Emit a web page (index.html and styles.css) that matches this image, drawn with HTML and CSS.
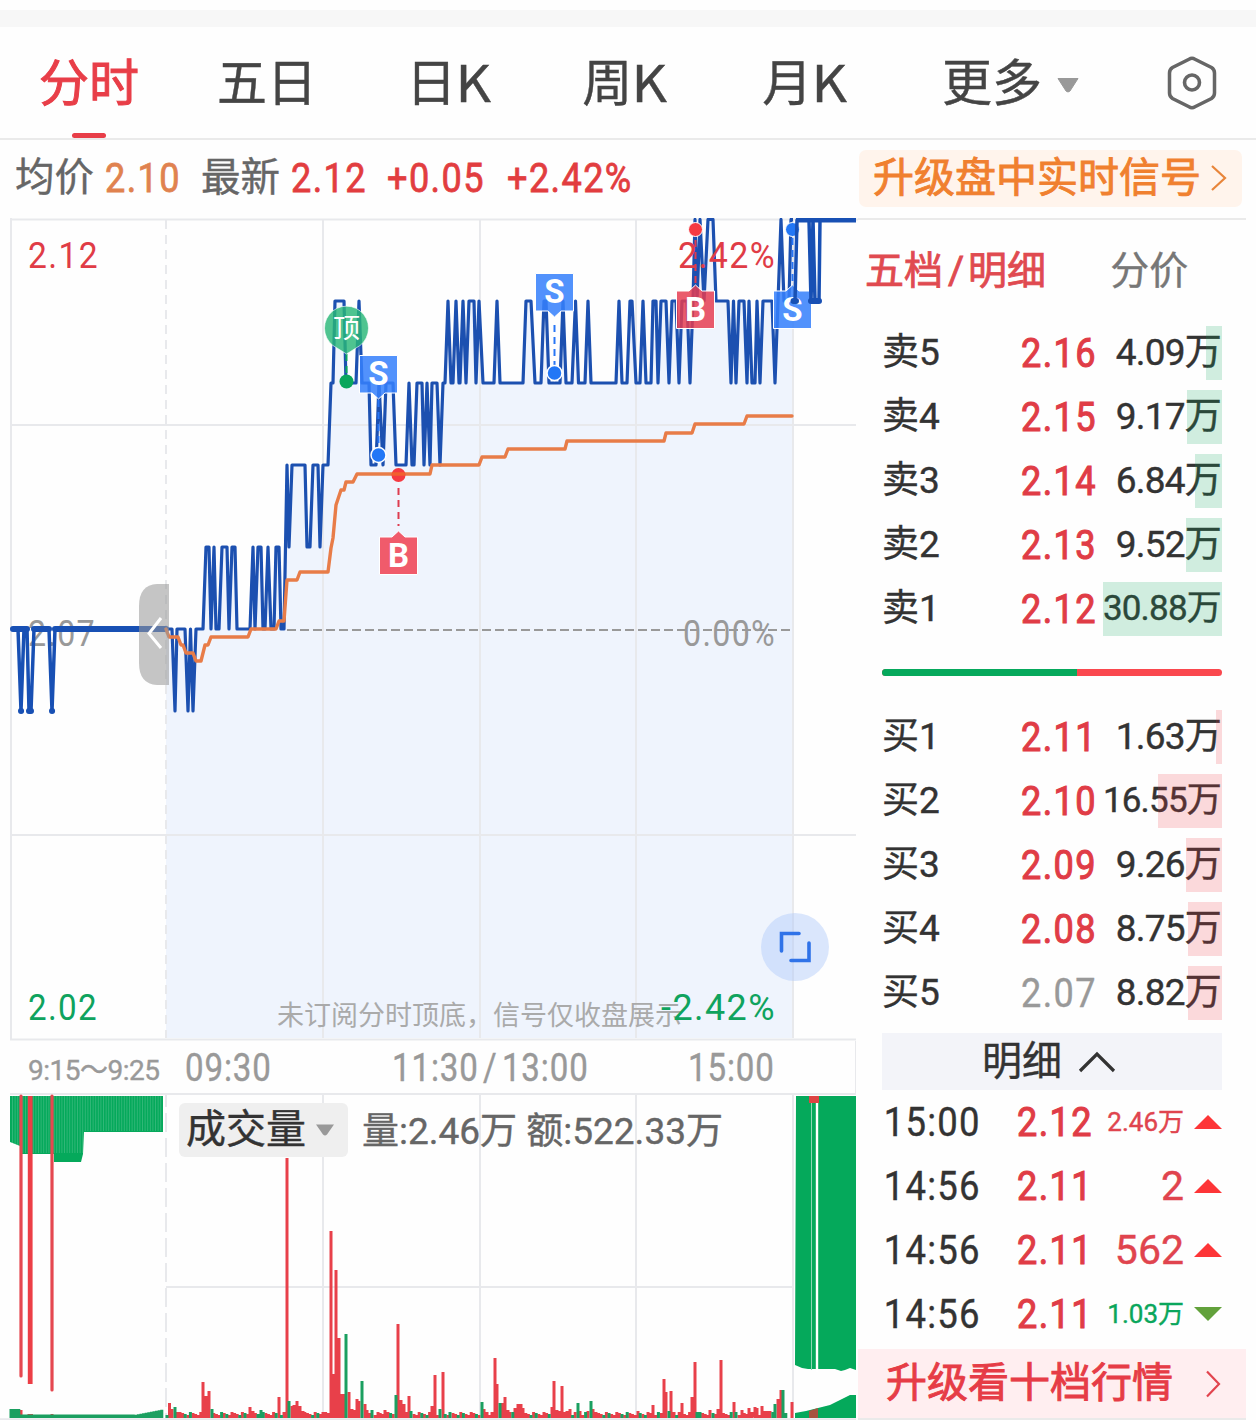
FILE: index.html
```html
<!DOCTYPE html>
<html lang="zh-CN">
<head>
    <meta charset="UTF-8">
    <meta name="viewport" content="width=device-width, initial-scale=1.0">
    <title>分时</title>
    <link rel="stylesheet" href="styles.css">
</head>
<body>
    <div class="top-strip"></div>

    <nav class="tabs">
        <a class="tab active">分时</a>
        <a class="tab">五日</a>
        <a class="tab">日<i>K</i></a>
        <a class="tab">周<i>K</i></a>
        <a class="tab">月<i>K</i></a>
        <a class="tab more">更多
            <svg width="24" height="16" viewBox="0 0 24 16"><path d="M2 1.5H22L14 14q-2 2-4 0Z" fill="#999" stroke="#999" stroke-linejoin="round"/></svg>
        </a>
        <a class="settings">
            <svg width="52" height="56" viewBox="0 0 52 56" fill="none" stroke="#666">
                <path d="M23 4.200q3-1.800 6 0L45.500 12.500q3 1.800 3 5.500V38q0 3.500-3 5.500L29 51.800q-3 1.800-6 0L6.500 43.500q-3-2-3-5.500V18q0-3.700 3-5.500Z" stroke-width="3.500"/>
                <ellipse cx="26" cy="27.500" rx="7.500" ry="7.500" stroke-width="3.600"/>
            </svg>
        </a>
    </nav>

    <div class="quote">
        <span class="q-label">均价</span><span class="q-num avg">2.10</span>
        <span class="q-label last">最新</span><span class="q-num">2.12</span>
        <span class="q-num diff">+0.05</span><span class="q-num pct">+2.42%</span>
        <a class="upgrade">升级盘中实时信号
            <svg width="18" height="28" viewBox="0 0 18 28"><path d="M3 2L16 14L3 26" fill="none" stroke="#e8853a" stroke-width="2.200"/></svg>
        </a>
    </div>

    <main class="main">
        <section class="charts">
            <svg class="price-chart" width="858" height="823" viewBox="0 218 858 823">
                <path id="area" fill="#eff4fd"/>
                <g class="grid">
                    <path d="M10 219.500H858M11 425H856M11 835H856M10 1039.500H856M11 218V1040"/>
                    <path d="M323 220V1038M480 220V1038M636 220V1038M793 220V1038"/>
                    <path d="M166 220V1038" stroke-dasharray="9 6"/>
                </g>
                <g class="labels">
                    <text x="28" y="646" textLength="68" lengthAdjust="spacingAndGlyphs" fill="#999">2.07</text>
                    <text x="683" y="646" textLength="93" lengthAdjust="spacingAndGlyphs" fill="#999">0.00%</text>
                </g>
                <path d="M287 630H793" stroke="#999" stroke-width="1.800" stroke-dasharray="9 4"/>
                <path id="line" class="line"/>
                <g class="auction">
                    <path d="M13 629H18L21 711L24 629H27L29 711H31L34 629H49L52 711L55 629H166" stroke-width="3.500"/>
                    <path d="M13 629H27M34 629H49M55 629H166" stroke-width="6"/>
                    <path d="M21 711h.1M29 711h2M52 711h.1" stroke-width="6"/>
                </g>
                <path class="avg-line" d="M166 629L169 637H178L181 645H183L186 653H193L196 661H201L205 645H208L211 637H248L251 629H276L279 621H284L287 580H297L300 572H328L331 548L333 538L336 505L341 490H344L346 482H353L357 474H430L432 465H479L482 457H505L508 449H565L567 441H664L666 433H692L695 424H744L747 416H792"/>

                <!-- left handle -->
                <path d="M169 584H157Q139 585 139 606V663Q139 684 157 685H169Z" fill="#999" fill-opacity=".57"/>
                <path d="M161 618L149 633.500L161 648" fill="none" stroke="#fff" stroke-width="3"/>

                <g class="labels">
                    <text x="28" y="268" textLength="71" lengthAdjust="spacingAndGlyphs" fill="#e03c46">2.12</text>
                    <text x="678" y="268" textLength="98" lengthAdjust="spacingAndGlyphs" fill="#e03c46">2.42%</text>
                    <text x="28" y="1020" textLength="70" lengthAdjust="spacingAndGlyphs" fill="#0fa35e">2.02</text>
                </g>
                <text class="hint" x="277" y="1025" textLength="405">未订阅分时顶底，信号仅收盘展示</text>
                <g class="labels">
                    <text x="661" y="1020" textLength="115" lengthAdjust="spacingAndGlyphs" fill="#0fa35e">-2.42%</text>
                </g>

                <!-- signals -->
                <path d="M346.500 354V376" class="stem" stroke="#0aa65c"/>
                <circle cx="346.500" cy="381.500" r="7" fill="#0aa65c"/>
                <path d="M346.500 354L337 348A22 22 0 1 1 356 348Z" fill="#28b777" fill-opacity=".82" stroke="#fff" stroke-opacity=".6"/>
                <text class="flag top" x="346.500" y="338">顶</text>

                <path d="M378.500 400V446" class="stem" stroke="#2876f5"/>
                <circle cx="378.500" cy="455" r="7.500" fill="#2277f6" stroke="#fff" stroke-width="1.500"/>
                <path d="M359.500 355.500H397.500V393H385L378.500 399L372 393H359.500Z" fill="#3580fb" fill-opacity=".86" stroke="#fff" stroke-width="1"/>
                <text class="flag" x="378.500" y="385">S</text>

                <path d="M554.500 325V365" class="stem" stroke="#2876f5"/>
                <circle cx="554.500" cy="373" r="7.500" fill="#2277f6" stroke="#fff" stroke-width="1.500"/>
                <path d="M535.500 273.500H573.500V311H561L554.500 317L548 311H535.500Z" fill="#3580fb" fill-opacity=".86" stroke="#fff" stroke-width="1"/>
                <text class="flag" x="554.500" y="303">S</text>

                <circle cx="398.500" cy="475" r="7" fill="#f53a42"/>
                <path d="M392 474H405" stroke="#f2602f" stroke-width="3.500"/>
                <path d="M398.500 488V526" class="stem" stroke="#dd3c50"/>
                <path d="M379.500 537H392L398.500 531L405 537H417.500V574.500H379.500Z" fill="#ef4a5b" fill-opacity=".9" stroke="#fff" stroke-width="1"/>
                <text class="flag" x="398.500" y="567">B</text>

                <path d="M695.500 240V284" class="stem" stroke="#dd3c50"/>
                <circle cx="695.500" cy="229.500" r="7" fill="#f53a42" stroke="#fff" stroke-width="1"/>
                <path d="M676.500 291H689L695.500 285L702 291H714.500V328.500H676.500Z" fill="#e63c50" fill-opacity=".84" stroke="#fff" stroke-width="1"/>
                <text class="flag" x="695.500" y="321">B</text>

                <path d="M792.500 238V284" class="stem" stroke="#2876f5"/>
                <circle cx="792.500" cy="229.500" r="7" fill="#2277f6" stroke="#fff" stroke-width="1"/>
                <path d="M773.500 291H786L792.500 285L799 291H811.500V328.500H773.500Z" fill="#3580fb" fill-opacity=".86" stroke="#fff" stroke-width="1"/>
                <text class="flag" x="792.500" y="321">S</text>

                <g class="auction">
                    <path d="M795 301L797 220H809L811 301L813 220L815 301H819L820 220" stroke-width="3.500"/>
                    <path class="flat-end" d="M796 220H856" stroke-width="5"/>
                    <path d="M793.500 301H796M811 301H819" stroke-width="6"/>
                </g>

                <!-- fullscreen -->
                <circle cx="795" cy="947" r="34" fill="#a9c6fa" fill-opacity=".42"/>
                <path d="M799 933.500H781.500V951M791 960.500H809V943" fill="none" stroke="#3073e8" stroke-width="3.600" stroke-linecap="round"/>
            </svg>

            <div class="time-axis">
                <span class="auction-time">9:15～9:25</span>
                <span class="t">09:30</span>
                <span class="t">11:30<b>/</b>13:00</span>
                <span class="t">15:00</span>
            </div>

            <div class="volume">
                <svg class="volume-chart" width="858" height="327" viewBox="0 1093 858 327">
                    <g class="grid">
                        <path d="M10 1094H856M166 1287H793M0 1419.300H856M323 1094V1418M480 1094V1418M636 1094V1418M793 1094V1418"/>
                        <path d="M166 1088V1418" stroke-dasharray="19 6"/>
                    </g>
                    <path d="M10 1096H163V1132H84L83 1154L81 1162H54V1154H20V1146L10 1142Z" fill="#05a95b"/>
                    <path id="stripes" stroke="#fff" stroke-opacity=".22" stroke-width=".8"/>
                    <path d="M21 1096V1376M52 1096V1390" stroke="#e54850" stroke-width="3.200" stroke-linecap="round"/>
                    <path d="M30.200 1096V1384" stroke="#ec3e46" stroke-width="4.800"/>
                    <path d="M796 1096H856V1370L850 1368L845 1370L841 1371L835 1369H808L802 1368L795 1365Z" fill="#05a95b"/>
                    <path d="M817 1103V1372" stroke="#fff" stroke-width="2.400"/>
                    <path d="M811.500 1103V1370" stroke="#8ad7b3" stroke-width="1"/>
                    <path d="M809 1096H819V1103H809Z" fill="#dd4444"/>
                    <path d="M795 1418V1413L806 1411L818 1408L830 1405L838 1401L850 1395H856V1418Z" fill="#05a95b"/>
                    <path d="M809 1418V1411L818 1408V1418Z" fill="#a85340"/>
                    <path id="vol-up" class="bar up"/>
                    <path id="vol-down" class="bar down"/>
                </svg>
                <div class="volume-head">
                    <span class="picker">成交量
                        <svg width="20" height="14" viewBox="0 0 20 14"><path d="M1 1.500H19L12 11.500q-2 2-4 0Z" fill="#999"/></svg>
                    </span>
                    <span class="volume-info">量:2.46万 额:522.33万</span>
                </div>
            </div>
        </section>

        <aside class="side">
            <div class="side-tabs"><span class="active">五档<i>/</i>明细</span><span>分价</span></div>

            <ul class="book sell">
                <li><span>卖5</span><b>2.16</b><em>4.09万</em><i style="width:16px"></i></li>
                <li><span>卖4</span><b>2.15</b><em>9.17万</em><i style="width:35px"></i></li>
                <li><span>卖3</span><b>2.14</b><em>6.84万</em><i style="width:27px"></i></li>
                <li><span>卖2</span><b>2.13</b><em>9.52万</em><i style="width:36px"></i></li>
                <li><span>卖1</span><b>2.12</b><em class="long">30.88万</em><i style="width:119px"></i></li>
            </ul>
            <div class="ratio"><div class="ratio-sell"></div></div>
            <ul class="book buy">
                <li><span>买1</span><b>2.11</b><em>1.63万</em><i style="width:6px"></i></li>
                <li><span>买2</span><b>2.10</b><em class="long">16.55万</em><i style="width:64px"></i></li>
                <li><span>买3</span><b>2.09</b><em>9.26万</em><i style="width:36px"></i></li>
                <li><span>买4</span><b>2.08</b><em>8.75万</em><i style="width:34px"></i></li>
                <li><span>买5</span><b class="flat">2.07</b><em>8.82万</em><i style="width:34px"></i></li>
            </ul>

            <div class="detail-head">明细
                <svg width="38" height="22" viewBox="0 0 38 22"><path d="M2 20L19 3L36 20" fill="none" stroke="#333" stroke-width="3.200"/></svg>
            </div>
            <ul class="ticks">
                <li><span>15:00</span><b>2.12</b><em class="small">2.46万</em><svg width="28" height="14" viewBox="0 0 28 14"><path d="M0 14L14 0L28 14Z" fill="#fd3537"/></svg></li>
                <li><span>14:56</span><b>2.11</b><em>2</em><svg width="28" height="14" viewBox="0 0 28 14"><path d="M0 14L14 0L28 14Z" fill="#fd3537"/></svg></li>
                <li><span>14:56</span><b>2.11</b><em>562</em><svg width="28" height="14" viewBox="0 0 28 14"><path d="M0 14L14 0L28 14Z" fill="#fd3537"/></svg></li>
                <li><span>14:56</span><b>2.11</b><em class="small green">1.03万</em><svg width="28" height="14" viewBox="0 0 28 14"><path d="M0 0L14 14L28 0Z" fill="#62a13b"/></svg></li>
            </ul>
            <a class="level-ten">升级看十档行情
                <svg width="18" height="28" viewBox="0 0 18 28"><path d="M3 1.500L15 14L3 26.500" fill="none" stroke="#e2444e" stroke-width="2.200"/></svg>
            </a>
        </aside>
    </main>

    <script src="chart.js"></script>
</body>
</html>
```
FILE: styles.css
```css
* {
    margin: 0;
    padding: 0;
    box-sizing: border-box;
}

body {
    width: 1256px;
    height: 1420px;
    overflow: hidden;
    background: #fefefe;
    font-family: Roboto, "Noto Sans CJK SC", sans-serif;
    color: #333;
    -webkit-text-stroke: .4px;
}

svg {
    display: block;
    flex: none;
}

ul {
    list-style: none;
}

i, em {
    font-style: normal;
}

.top-strip {
    height: 17px;
    margin-top: 10px;
    background: #f7f7f7;
}

/* period tabs */
.tabs {
    display: grid;
    grid-template-columns: 178px 178px 184px 168px 192px 228px 128px;
    height: 113px;
    border-bottom: 2px solid #eaeaea;
}

.tab {
    position: relative;
    display: flex;
    align-items: center;
    justify-content: center;
    padding-top: 4px;
    font-size: 50px;
    line-height: 107px;
    color: #444;
}

.tab i {
    font-family: "Noto Sans CJK SC", sans-serif;
    margin-left: 1px;
    transform: translateY(-4px) scaleX(1.1);
}

.tab.active {
    color: #e83e48;
    -webkit-text-stroke: 1px;
}

.tab.active::after {
    content: "";
    position: absolute;
    left: 72px;
    bottom: 0;
    width: 34px;
    height: 5px;
    border-radius: 3px;
    background: #e83e48;
}

.tab.more {
    justify-content: flex-start;
    padding-left: 42px;
    gap: 14px;
}

.settings {
    display: flex;
    align-items: center;
    padding-left: 38px;
}

/* quote line */
.quote {
    display: flex;
    align-items: center;
    height: 78px;
    padding: 0 14px 2px 15px;
    white-space: nowrap;
}

.q-label {
    font-size: 39.5px;
    line-height: 76px;
    color: #666;
}

.q-label.last {
    margin-left: 20px;
}

/* narrow, loosely spaced digits */
.q-num {
    width: 76px;
    margin-left: 11px;
    font-size: 41px;
    line-height: 74px;
    letter-spacing: 1.6px;
    transform: scaleX(.88);
    transform-origin: left;
    color: #e23d3f;
    -webkit-text-stroke: .8px;
}

.q-num.avg {
    color: #e0824f;
}

.q-num.diff {
    width: 99px;
    margin-left: 20px;
}

.q-num.pct {
    width: 128px;
    margin-left: 21px;
}

.upgrade {
    display: flex;
    align-items: center;
    gap: 8px;
    width: 383px;
    height: 57px;
    margin-left: auto;
    padding-left: 14px;
    border-radius: 7px;
    background: #fff4ec;
    color: #f0802f;
    font-size: 41px;
    line-height: 59px;
    -webkit-text-stroke: .9px;
}

/* charts */
.main {
    display: flex;
}

.charts {
    width: 858px;
    flex: none;
}

.grid path {
    fill: none;
    stroke: #e8e9ec;
    stroke-width: 2;
}

.line {
    fill: none;
    stroke: #1c50b0;
    stroke-width: 3.2;
    stroke-linejoin: round;
}

.auction path {
    fill: none;
    stroke: #1850b4;
    stroke-linecap: round;
    stroke-linejoin: round;
}

.auction .flat-end {
    stroke-linecap: butt;
}

.avg-line {
    fill: none;
    stroke: #e87c48;
    stroke-width: 3.4;
    stroke-linejoin: round;
    stroke-linecap: round;
}

.labels text {
    font-size: 37px;
    letter-spacing: 1.5px;
    -webkit-text-stroke: 0;
}

.hint {
    font-size: 27px;
    fill: #aaa;
    -webkit-text-stroke: 0;
}

.stem {
    fill: none;
    stroke-width: 2;
    stroke-dasharray: 7 5;
}

.flag {
    fill: #fff;
    font-size: 33px;
    font-weight: 700;
    text-anchor: middle;
    -webkit-text-stroke: 0;
}

.flag.top {
    font-size: 27px;
    font-weight: 400;
}

.time-axis {
    display: grid;
    grid-template-columns: 157px 207px 296px 1fr;
    height: 52px;
    margin: 0 2px 0 28px;
    border-right: 1px solid #e8e9ec;
    color: #999;
    font-size: 38px;
    line-height: 55px;
    white-space: nowrap;
}

.time-axis b {
    padding: 0 5px;
    font-weight: 400;
}

.time-axis .auction-time {
    font-size: 28px;
    line-height: 60px;
    letter-spacing: -.5px;
}

.t {
    letter-spacing: 1px;
    transform: scaleX(.87);
    transform-origin: left;
}

.volume {
    position: relative;
}

.volume-head {
    position: absolute;
    left: 179px;
    top: 7px;
    display: flex;
    align-items: center;
    gap: 14px;
    white-space: nowrap;
}

.picker {
    display: flex;
    align-items: center;
    gap: 9px;
    width: 169px;
    height: 54px;
    padding-left: 7px;
    border-radius: 6px;
    background: #efefef;
    font-size: 40px;
    line-height: 54px;
}

.volume-info {
    padding-top: 4px;
    color: #666;
    font-size: 37px;
    line-height: 56px;
}

.bar {
    fill: none;
    stroke-width: 3;
}

.bar.up {
    stroke: #e8404a;
}

.bar.down {
    stroke: #1b9f60;
}

/* order book */
.side {
    width: 388px;
    border-top: 2px solid #eaeaea;
}

.side-tabs {
    display: flex;
    gap: 64px;
    height: 106px;
    padding-left: 7px;
    font-size: 39px;
    line-height: 102px;
    color: #777;
}

.side-tabs .active {
    color: #e04a50;
    -webkit-text-stroke: .8px;
}

.side-tabs i {
    padding: 0 4px 0 5px;
}

.book {
    width: 340px;
    margin-left: 24px;
}

.book li {
    position: relative;
    display: grid;
    grid-template-columns: 100px 115px 1fr;
    height: 54px;
    margin-bottom: 10px;
    line-height: 54px;
    white-space: nowrap;
}

.book span {
    font-size: 37px;
}

.book b {
    color: #e03c46;
    font-size: 41px;
    font-weight: 400;
    text-align: right;
    letter-spacing: 1.6px;
    transform: scaleX(.88);
    transform-origin: right;
    -webkit-text-stroke: 1.1px;
}

.book b.flat {
    color: #999;
    -webkit-text-stroke: .4px;
}

.book em {
    justify-self: end;
    padding-right: 1px;
    font-size: 37px;
    letter-spacing: -.8px;
}

.book em.long {
    font-size: 35px;
}

/* depth bar lies over the amount */
.book i {
    position: absolute;
    top: 0;
    right: 0;
    height: 54px;
}

.sell i {
    background: rgba(10, 165, 90, .19);
}

.buy i {
    background: rgba(240, 50, 60, .18);
}

.ratio {
    width: 340px;
    height: 7px;
    margin: 33px 0 34px 24px;
    border-radius: 4px;
    overflow: hidden;
    background: #fa484e;
}

.ratio-sell {
    width: 195px;
    height: 7px;
    background: #06a95c;
}

.detail-head {
    display: flex;
    align-items: center;
    justify-content: center;
    gap: 16px;
    width: 340px;
    height: 57px;
    margin: 13px 0 0 24px;
    padding-right: 6px;
    background: #f3f4f9;
    font-size: 40px;
    line-height: 57px;
}

.ticks {
    width: 340px;
    margin-left: 24px;
}

.ticks li {
    display: grid;
    grid-template-columns: 110px 101px 91px 38px;
    align-items: center;
    height: 64px;
    line-height: 64px;
    white-space: nowrap;
}

.ticks span {
    padding-left: 2px;
    font-size: 41px;
    letter-spacing: 1.4px;
    transform: scaleX(.89);
    transform-origin: left;
}

.ticks b {
    color: #e03c46;
    font-size: 41px;
    font-weight: 400;
    text-align: right;
    letter-spacing: 1.6px;
    transform: scaleX(.88);
    transform-origin: right;
    -webkit-text-stroke: 1.1px;
}

.ticks em {
    justify-self: end;
    color: #e0444e;
    font-size: 41px;
}

.ticks em.small {
    font-size: 26px;
}

.ticks em.green {
    color: #0aa65c;
}

.ticks svg {
    justify-self: end;
}

.level-ten {
    display: flex;
    align-items: center;
    justify-content: space-between;
    height: 71px;
    margin-top: 3px;
    padding: 0 24px 0 28px;
    background: #ffeef0;
    border-bottom: 2px solid #eaeaea;
    color: #e63c46;
    font-size: 41px;
    line-height: 69px;
    -webkit-text-stroke: .9px;
}
```
FILE: chart.js
```js
// price ticks: x, level (0 = 2.06 ... 6 = 2.12)
const ticks = `166,1 172,1 175,0 177,1 185,1 188,0 190.5,1 193,0 196,1 203,1 206,2 209,2 211,1 214,2 216,1 219,1
222,2 227,2 229,1 232,2 235,2 237,1 250,1 253,2 255,1 258,2 261,2 263,1 265,1 268,2 271,1 274,1 276,2 279,2 281,1
284,1 287,3 289,2 292,3 305,3 307,2 310,2 313,3 318,3 320,2 323,3 328,3 331,4 333,4 335,5 344,5 346,4 356,4 359,5
362,4 369,4 371,3 376,3 379,4 383,3 386,4 393,4 396,3 406,3 409,4 412,3 414,3 417,4 422,4 424,3 427,4 430,3 432,4
437,4 440,3 443,4 445,4 448,5 451,4 453,4 456,5 459,4 460,4 463,5 466,4 469,5 474,5 476,4 479,5 483,4 494,4 497,5
500,4 523,4 526,5 531,5 535,4 541,4 544,5 546,5 549,4 560,4 563,5 566,4 572,4 575.5,5 578.5,4 585,4 588,5 591,4
616,4 619,5 622,4 627,4 630,5 632,5 636,4 640,4 643,5 646,4 651,4 653,5 656,5 658,4 661,5 666,5 669,4 672,5 676,5
679,4 682,5 687,5 690,4 693,5 695,6 697,5 700,6 704,5 708,6 713,6 716,5 728,5 731,4 733.5,5 736,4 739,5 744,5
747,4 749,5 752,4 755,4 757,5 760,4 763,5 772,5 775,4 778,5 781,6 784,5 789,5 791,6 793,6`;

const points = ticks.split(/\s+/).map(p => {
    const [x, level] = p.split(',').map(Number);
    return x + ' ' + (level === 6 ? 219.5 : 711 - level * 82);
});
document.getElementById('line').setAttribute('d', 'M' + points.join('L'));
document.getElementById('area').setAttribute('d', 'M' + points.join('L') + 'V1038H166Z');

// volume bars: x, height, g = falling
const tall = `169.5,15 172,9 175,11g 177.5,6 203,36 206,22 209,27 212,9g 250,11 253,7 261,8g 279,21 287,260 289,17g
292,12 294,13 297,17 300,12 303,7 323,6 331,187 333,44 336,148 339,80 341,24 343.5,24 346,84g 349,26 352,9 354,8
357,19 359,17 362,37g 365,14 367,8 372,8g 378,6 385,8 396,23g 398,94 401,18 404,14 406,6 409,22 411,7g 432,12
435,43 440,9g 443,46 450,6g 482,16g 484,9 487,6 495,60 497,34 500,15g 502,15 505,21 508,8 510,6 515,10 518,14
521,14 523,10 552,11 554,37 557,8 560,7 562,32 567,7 570,9 578,15g 580,7 588,7 591,17g 593,9 638,7 653,13 664,39
666,26 669,7g 671,27 674,6 682,15 692,21 695,56 697,6g 710,8 718,9 721,58 734,16 736,6g 742,8 749,10 755,11 757,10
762,12 765,7 767,7 770,7 775,14g 778,19 781,28 783,28g 792,16`.split(/\s+/);

let up = '', down = '';
const used = [];
tall.forEach(p => {
    const x = parseFloat(p);
    const d = `M${x} 1418v-${parseFloat(p.split(',')[1])}`;
    used.push(x);
    if (p.endsWith('g')) down += d; else up += d;
});
for (let i = 0; i < 239; i++) {
    const x = 167 + i * 2.6;
    if (x > 787 || used.some(u => Math.abs(u - x) < 1.5)) continue;
    const d = `M${x.toFixed(1)} 1418v-${3 + (i * 7 % 4)}`;
    if (i * 11 % 7 < 2) down += d; else up += d;
}
// call auction, before the open
for (let x = 11; x < 164; x += 2.6) {
    const h = x < 20 ? 9 : x > 135 ? 3 + (x - 135) / 5 : 3.5;
    down += `M${x} 1418v-${h}`;
}
up += 'M21 1418v-8M29 1418v-4M31.500 1418v-4M52 1418v-4';
document.getElementById('vol-up').setAttribute('d', up);
document.getElementById('vol-down').setAttribute('d', down);

let stripes = '';
for (let x = 12.500; x < 163; x += 2.6) stripes += `M${x} 1096V${x > 84 ? 1131 : 1153}`;
document.getElementById('stripes').setAttribute('d', stripes);
```
